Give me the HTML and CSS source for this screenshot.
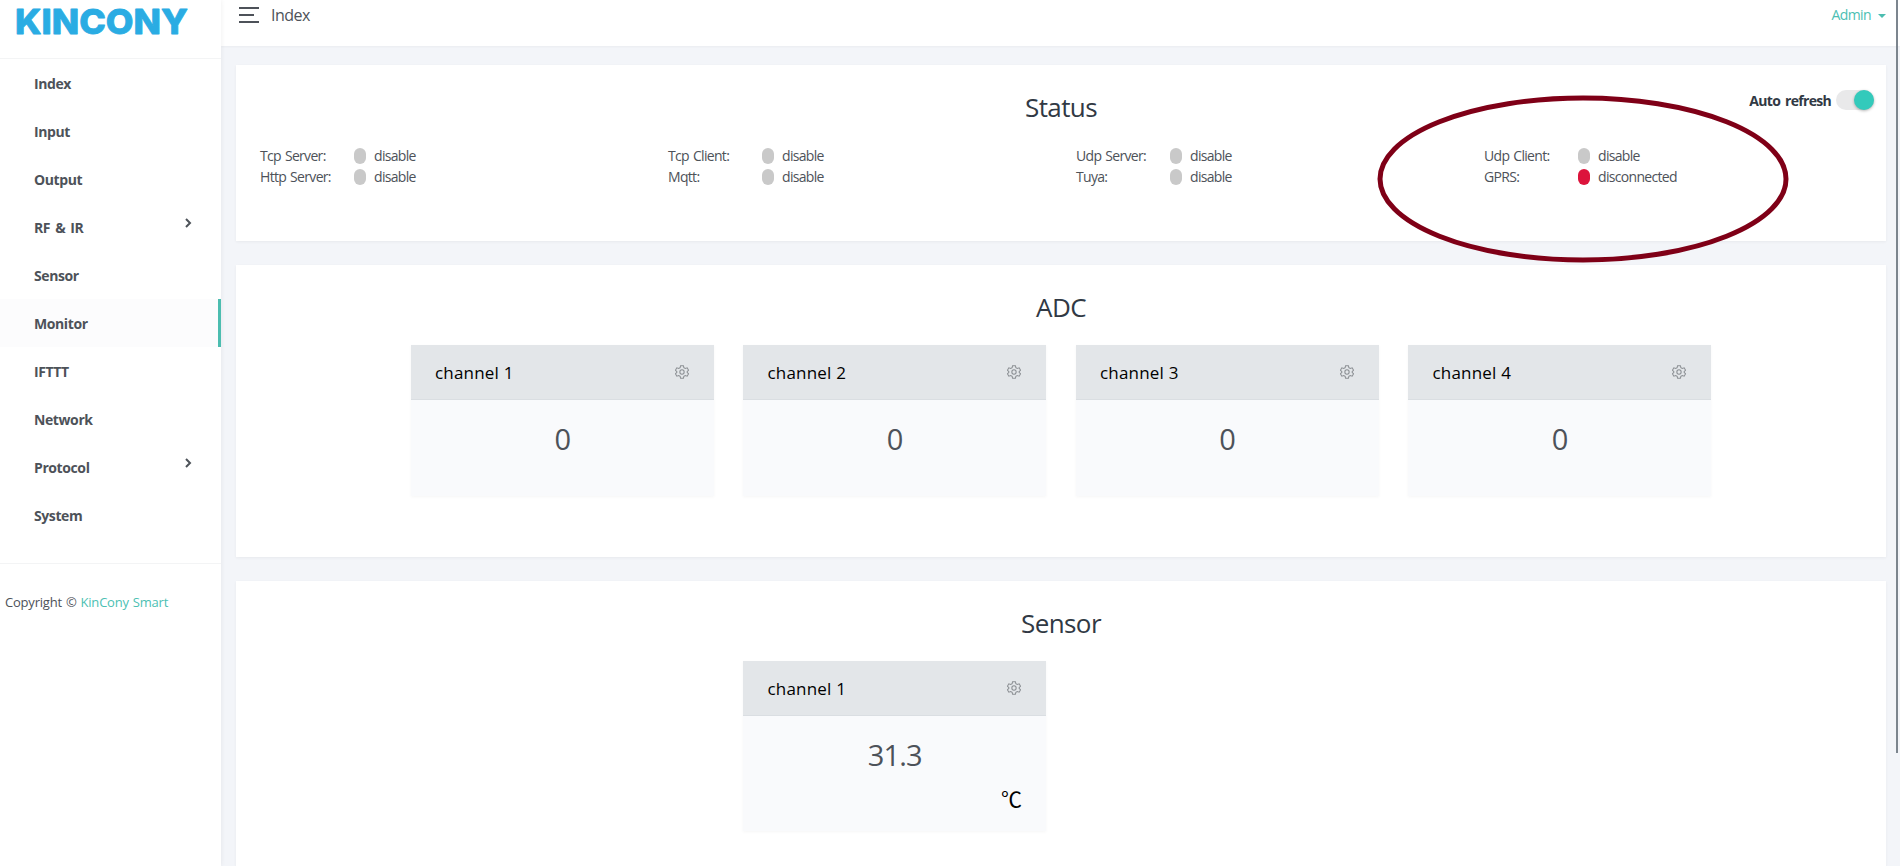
FILE: index.html
```
<!DOCTYPE html>
<html lang="en">
<head>
<meta charset="utf-8">
<title>KinCony Monitor</title>
<link rel="stylesheet" href="styles.css">
</head>
<body>
<svg class="defs" aria-hidden="true">
  <symbol id="gear" viewBox="0 0 24 24">
    <path d="M9.6 1.2h4.8l.8 3.3 2.4 1.4 3.3-1 2.4 4.1-2.5 2.4v1.2l2.5 2.4-2.4 4.1-3.3-1-2.4 1.4-.8 3.3H9.6l-.8-3.3-2.4-1.4-3.3 1L.7 15l2.5-2.4v-1.2L.7 9l2.4-4.1 3.3 1 2.4-1.4z"/>
    <circle cx="12" cy="12" r="3.7"/>
  </symbol>
</svg>
<div class="app">
  <aside class="sidebar">
    <div class="brand">
      <svg width="190" height="50" viewBox="0 0 190 50" role="img" aria-label="KinCony"><text class="brand-text" x="15" y="34" textLength="173" lengthAdjust="spacingAndGlyphs">KINCONY</text></svg>
    </div>
    <nav class="menu">
      <a class="menu-item">Index</a>
      <a class="menu-item">Input</a>
      <a class="menu-item">Output</a>
      <a class="menu-item">RF &amp; IR<svg class="chevron" viewBox="0 0 7 10"><path d="M1 1l4 4-4 4"/></svg></a>
      <a class="menu-item">Sensor</a>
      <a class="menu-item active">Monitor</a>
      <a class="menu-item">IFTTT</a>
      <a class="menu-item">Network</a>
      <a class="menu-item">Protocol<svg class="chevron" viewBox="0 0 7 10"><path d="M1 1l4 4-4 4"/></svg></a>
      <a class="menu-item">System</a>
    </nav>
    <p class="copyright">Copyright © <a class="link">KinCony Smart</a></p>
  </aside>
  <main class="main">
    <header class="topbar">
      <span class="burger"><i></i><i class="short"></i><i></i></span>
      <span class="page-name">Index</span>
      <a class="admin">Admin<span class="caret"></span></a>
    </header>
    <section class="panel status">
      <h4 class="title">Status</h4>
      <label class="refresh">Auto refresh<span class="switch"><span class="knob"></span></span></label>
      <div class="status-grid">
        <div class="row"><span class="key">Tcp Server:</span><span class="dot"></span><span class="state">disable</span></div>
        <div class="row"><span class="key">Tcp Client:</span><span class="dot"></span><span class="state">disable</span></div>
        <div class="row"><span class="key">Udp Server:</span><span class="dot"></span><span class="state">disable</span></div>
        <div class="row"><span class="key">Udp Client:</span><span class="dot"></span><span class="state">disable</span></div>
        <div class="row"><span class="key">Http Server:</span><span class="dot"></span><span class="state">disable</span></div>
        <div class="row"><span class="key">Mqtt:</span><span class="dot"></span><span class="state">disable</span></div>
        <div class="row"><span class="key">Tuya:</span><span class="dot"></span><span class="state">disable</span></div>
        <div class="row"><span class="key">GPRS:</span><span class="dot down"></span><span class="state">disconnected</span></div>
      </div>
    </section>
    <section class="panel adc">
      <h4 class="title">ADC</h4>
      <div class="cards">
        <div class="card"><div class="card-head">channel 1<svg class="gear"><use href="#gear"/></svg></div><div class="value">0</div></div>
        <div class="card"><div class="card-head">channel 2<svg class="gear"><use href="#gear"/></svg></div><div class="value">0</div></div>
        <div class="card"><div class="card-head">channel 3<svg class="gear"><use href="#gear"/></svg></div><div class="value">0</div></div>
        <div class="card"><div class="card-head">channel 4<svg class="gear"><use href="#gear"/></svg></div><div class="value">0</div></div>
      </div>
    </section>
    <section class="panel sensor">
      <h4 class="title">Sensor</h4>
      <div class="cards">
        <div class="card second"><div class="card-head">channel 1<svg class="gear"><use href="#gear"/></svg></div><div class="value">31.3</div><div class="unit">℃</div></div>
      </div>
    </section>
  </main>
</div>
<svg class="highlight" viewBox="0 0 412 168"><ellipse cx="206" cy="84" rx="203" ry="81"/></svg>
<div class="scroll-thumb"></div>
</body>
</html>
```
FILE: styles.css
```
* { box-sizing: border-box; }
body {
  margin: 0;
  height: 866px;
  overflow: hidden;
  position: relative;
  background: #f3f5f9;
  color: #4d5259;
  font: 14px "Open Sans", "Noto Sans", sans-serif;
}
.defs { display: none; }
.app { display: flex; height: 866px; }

.sidebar {
  width: 221px;
  flex: none;
  background: #fff;
  box-shadow: 0 0 5px rgba(0, 0, 0, .07);
  z-index: 1;
}
.brand { height: 58px; }
.brand svg { display: block; }
.brand-text {
  font: 800 34.5px Inter, sans-serif;
  fill: #2aace3;
  stroke: #2aace3;
  stroke-width: .8px;
  stroke-linejoin: round;
}
.menu {
  padding-bottom: 24px;
  border: solid #f3f4f5;
  border-width: 1px 0;
}
.menu-item {
  display: flex;
  height: 48px;
  padding: 0 29px 0 34px;
  line-height: 49px;
  font-weight: 700;
  letter-spacing: -.4px;
  word-spacing: 1.8px;
}
.menu-item.active { background: #fcfcfd; border-right: 3px solid #4cbdb0; }
.chevron {
  width: 7px;
  height: 10px;
  margin: 15px 0 0 auto;
  fill: none;
  stroke: #4d5259;
  stroke-width: 2;
}
.copyright {
  margin: 26px 0 0 5px;
  font-size: 13px;
  line-height: 24px;
  letter-spacing: -.2px;
  word-spacing: .8px;
}
.link, .admin { color: #4cbfb3; }

.main { flex: 1; min-width: 0; }
.topbar {
  display: flex;
  height: 46px;
  margin-bottom: 19px;
  padding: 0 14px 0 18px;
  background: #fff;
  box-shadow: 0 1px 2px rgba(0, 0, 0, .04);
}
.burger {
  display: flex;
  flex-direction: column;
  gap: 5px;
  width: 20px;
  padding-top: 7px;
}
.burger i { height: 2px; background: #4d5259; }
.burger .short { width: 15px; }
.page-name { margin-left: 12px; font-size: 16px; line-height: 31px; letter-spacing: -.5px; }
.admin { display: flex; margin-left: auto; line-height: 30px; letter-spacing: -.6px; }
.caret {
  margin: 14px 0 0 7px;
  width: 8px;
  height: 4px;
  background: #4cbdb0;
  clip-path: polygon(0 0, 100% 0, 50% 100%);
}

.panel {
  position: relative;
  margin: 0 14px 24px 15px;
  padding-top: 22px;
  background: #fff;
  box-shadow: 0 1px 3px rgba(0, 0, 0, .05);
}
.status { height: 176px; }
.adc { height: 292px; }
.sensor { height: 285px; margin-bottom: 0; }
.title {
  height: 58px;
  margin: 0;
  color: #313944;
  font-size: 26px;
  font-weight: 400;
  line-height: 40px;
  letter-spacing: -.6px;
  text-align: center;
}
.refresh {
  position: absolute;
  top: 25px;
  right: 12px;
  display: flex;
  gap: 5px;
  color: #313944;
  font-weight: 700;
  line-height: 21px;
  letter-spacing: -.7px;
  word-spacing: 2px;
}
.switch { width: 38px; height: 20px; border-radius: 10px; background: #e9e9ea; }
.knob {
  display: block;
  width: 20px;
  height: 20px;
  margin-left: 18px;
  border-radius: 50%;
  background: #33cabb;
  box-shadow: 0 1px 3px rgba(0, 0, 0, .3);
}
.status-grid {
  display: grid;
  grid-template-columns: repeat(4, 408px);
  grid-auto-rows: 21px;
  padding-left: 24px;
}
.row { display: flex; line-height: 22px; letter-spacing: -.68px; word-spacing: 1px; }
.key { width: 94px; }
.dot { width: 12px; height: 16px; margin: 3px 8px 0 0; border-radius: 6px; background: #c9c9c9; }
.dot.down { background: #dc143c; }
.state { line-height: 21px; }

.cards {
  display: grid;
  grid-template-columns: repeat(4, 302.6px);
  justify-content: space-between;
  padding: 0 175px;
}
.card {
  height: 151px;
  background: #f9fafc;
  box-shadow: 0 1px 3px rgba(0, 0, 0, .04);
}
.card.second { grid-column: 2; height: 170px; }
.card-head {
  display: flex;
  justify-content: space-between;
  height: 55px;
  padding: 0 25px 0 24px;
  background: #e3e6e9;
  border-bottom: 1px solid #dadee2;
  color: #000;
  font-size: 17px;
  line-height: 55px;
  letter-spacing: .2px;
}
.gear {
  width: 14px;
  height: 14px;
  margin-top: 20px;
  fill: none;
  stroke: #8b8f93;
  stroke-width: 1.8;
}
.value {
  padding-top: 20px;
  font-size: 29px;
  line-height: 38px;
  letter-spacing: -.8px;
  text-align: center;
}
.unit {
  padding-right: 24px;
  color: #000;
  font-family: "Noto Sans CJK SC", sans-serif;
  font-size: 21px;
  line-height: 48px;
  text-align: right;
}
.highlight {
  position: absolute;
  left: 1376.5px;
  top: 94.5px;
  width: 412px;
  height: 168px;
  z-index: 2;
  fill: none;
  stroke: #7f0017;
  stroke-width: 5;
}
.scroll-thumb {
  position: absolute;
  top: 0;
  right: 2px;
  width: 2px;
  height: 753px;
  background: #7c858e;
  z-index: 2;
}
```
